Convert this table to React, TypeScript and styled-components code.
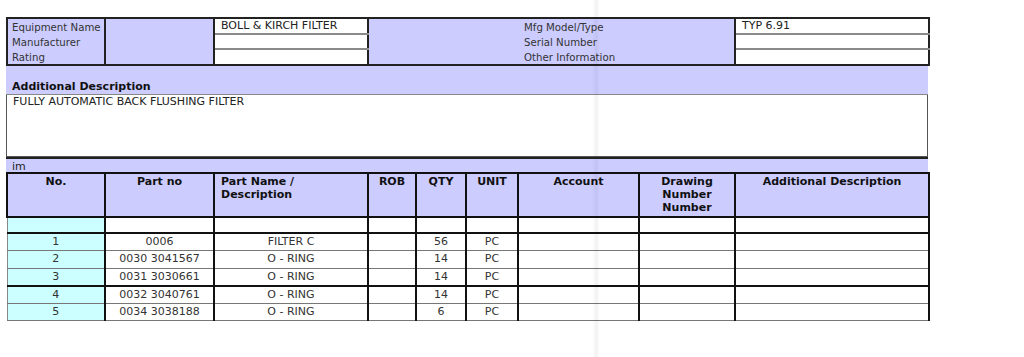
import React from 'react';
import styled, { createGlobalStyle } from 'styled-components';

const GlobalStyle = createGlobalStyle`
  html, body {
    margin: 0;
    padding: 0;
    background: #ffffff;
  }
  body {
    font-family: "DejaVu Sans", Verdana, sans-serif;
    font-size: 11px;
    color: #222;
  }
`;

const BLUE = '#ccccff';
const CYAN = '#ccffff';

const partColumns = [
  { label: 'No.', width: 98, align: 'center' },
  { label: 'Part no', width: 109, align: 'center' },
  { label: 'Part Name / Description', width: 154, align: 'left' },
  { label: 'ROB', width: 48, align: 'center' },
  { label: 'QTY', width: 50, align: 'center' },
  { label: 'UNIT', width: 52, align: 'center' },
  { label: 'Account', width: 121, align: 'center' },
  { label: 'Drawing Number Number', width: 96, align: 'center' },
  { label: 'Additional Description', width: 194, align: 'center' },
];

const parts = [
  { no: '1', partNo: '0006', name: 'FILTER C', qty: '56', unit: 'PC', strong: true },
  { no: '2', partNo: '0030 3041567', name: 'O - RING', qty: '14', unit: 'PC', strong: false },
  { no: '3', partNo: '0031 3030661', name: 'O - RING', qty: '14', unit: 'PC', strong: false },
  { no: '4', partNo: '0032 3040761', name: 'O - RING', qty: '14', unit: 'PC', strong: true },
  { no: '5', partNo: '0034 3038188', name: 'O - RING', qty: '6', unit: 'PC', strong: false },
];

const App = () => {
  return (
    <>
      <GlobalStyle />
      <Page>
        <Sheet>
          <InfoTable>
            <colgroup>
              <col style={{ width: 98 }} />
              <col style={{ width: 109 }} />
              <col style={{ width: 154 }} />
              <col style={{ width: 367 }} />
              <col style={{ width: 194 }} />
            </colgroup>
            <tbody>
              <tr>
                <LabelCell rowSpan={3}>
                  <LabelLine>Equipment Name</LabelLine>
                  <LabelLine>Manufacturer</LabelLine>
                  <LabelLine>Rating</LabelLine>
                </LabelCell>
                <BlueCell rowSpan={3} />
                <ValueCell>BOLL &amp; KIRCH FILTER</ValueCell>
                <MidLabelCell rowSpan={3}>
                  <LabelLine>Mfg Model/Type</LabelLine>
                  <LabelLine>Serial Number</LabelLine>
                  <LabelLine>Other Information</LabelLine>
                </MidLabelCell>
                <ValueCell>TYP 6.91</ValueCell>
              </tr>
              <tr>
                <ValueCell />
                <ValueCell />
              </tr>
              <tr>
                <ValueCell $last />
                <ValueCell $last />
              </tr>
            </tbody>
          </InfoTable>

          <SectionBand>Additional Description</SectionBand>
          <DescriptionBox>FULLY AUTOMATIC BACK FLUSHING FILTER</DescriptionBox>
          <GroupBar>im</GroupBar>

          <PartsTable>
            <colgroup>
              {partColumns.map((c) => (
                <col key={c.label} style={{ width: c.width }} />
              ))}
            </colgroup>
            <thead>
              <tr>
                {partColumns.map((c) => (
                  <HeadCell key={c.label} $align={c.align}>
                    {c.label === 'Part Name / Description' ? (
                      <>
                        Part Name /<br />
                        Description
                      </>
                    ) : c.label === 'Drawing Number Number' ? (
                      <>
                        Drawing
                        <br />
                        Number
                        <br />
                        Number
                      </>
                    ) : (
                      c.label
                    )}
                  </HeadCell>
                ))}
              </tr>
            </thead>
            <tbody>
              <SpacerRow>
                <NoCell />
                {partColumns.slice(1).map((c) => (
                  <Cell key={c.label} />
                ))}
              </SpacerRow>
              {parts.map((p) => (
                <DataRow key={p.no} $strong={p.strong}>
                  <NoCell>{p.no}</NoCell>
                  <Cell>{p.partNo}</Cell>
                  <Cell>{p.name}</Cell>
                  <Cell />
                  <Cell>{p.qty}</Cell>
                  <Cell>{p.unit}</Cell>
                  <Cell />
                  <Cell />
                  <Cell />
                </DataRow>
              ))}
            </tbody>
          </PartsTable>
        </Sheet>
        <PageFold />
      </Page>
    </>
  );
};

const Page = styled.div`
  position: relative;
  width: 1024px;
  height: 357px;
  padding: 17px 0 0 6px;
  box-sizing: border-box;
  overflow: hidden;
`;

const Sheet = styled.div`
  width: 922px;
`;

const PageFold = styled.div`
  position: absolute;
  top: 0;
  left: 592px;
  width: 8px;
  height: 357px;
  background: linear-gradient(
    to right,
    rgba(0, 0, 0, 0) 0%,
    rgba(0, 0, 0, 0.05) 55%,
    rgba(0, 0, 0, 0.02) 80%,
    rgba(0, 0, 0, 0) 100%
  );
  pointer-events: none;
`;

const InfoTable = styled.table`
  width: 922px;
  border-collapse: collapse;
  table-layout: fixed;
  border: 2px solid #222;
`;

const LabelCell = styled.td`
  background: ${BLUE};
  border-right: 2px solid #222;
  padding: 0 4px;
  vertical-align: top;
  color: #333;
  font-size: 10.2px;
`;

const MidLabelCell = styled(LabelCell)`
  padding-left: 155px;
`;

const BlueCell = styled.td`
  background: ${BLUE};
  border-right: 2px solid #222;
`;

const LabelLine = styled.div`
  height: 15px;
  line-height: 17px;
  white-space: nowrap;
`;

const ValueCell = styled.td<{ $last?: boolean }>`
  height: 12px;
  padding: 1px 6px 0;
  line-height: 12px;
  background: #fff;
  border-right: 2px solid #222;
  border-bottom: ${(p) => (p.$last ? 'none' : '2px solid #8a8a8a')};
  white-space: nowrap;
  color: #222;
`;

const SectionBand = styled.div`
  height: 29px;
  box-sizing: border-box;
  background: ${BLUE};
  border-bottom: 1px solid #888;
  padding: 0 6px 1px;
  display: flex;
  align-items: flex-end;
  font-weight: bold;
  color: #111;
`;

const DescriptionBox = styled.div`
  height: 62px;
  box-sizing: border-box;
  border: 1px solid #555;
  border-top: none;
  padding: 1px 6px;
  line-height: 12px;
  color: #222;
`;

const GroupBar = styled.div`
  height: 15px;
  box-sizing: border-box;
  background: ${BLUE};
  border-top: 2px solid #222;
  padding: 0 6px;
  line-height: 15px;
  color: #222;
`;

const PartsTable = styled.table`
  width: 922px;
  border-collapse: collapse;
  table-layout: fixed;
`;

const HeadCell = styled.th<{ $align: string }>`
  height: 41px;
  background: ${BLUE};
  border: 2px solid #111;
  padding: 1px 6px 0;
  vertical-align: top;
  text-align: ${(p) => p.$align};
  font-weight: bold;
  line-height: 13px;
  color: #111;
`;

const SpacerRow = styled.tr`
  height: 16px;
`;

const DataRow = styled.tr<{ $strong: boolean }>`
  height: 17.5px;
  & > td {
    border-top: ${(p) => (p.$strong ? '2px solid #111' : '1px solid #555')};
  }
`;

const Cell = styled.td`
  border-left: 2px solid #111;
  border-right: 2px solid #111;
  border-bottom: 1px solid #777;
  padding: 0 4px;
  text-align: center;
  line-height: 14px;
  color: #333;
  background: #fff;
`;

const NoCell = styled(Cell)`
  background: ${CYAN};
  border-left: 1px solid #888;
`;

export default App;
